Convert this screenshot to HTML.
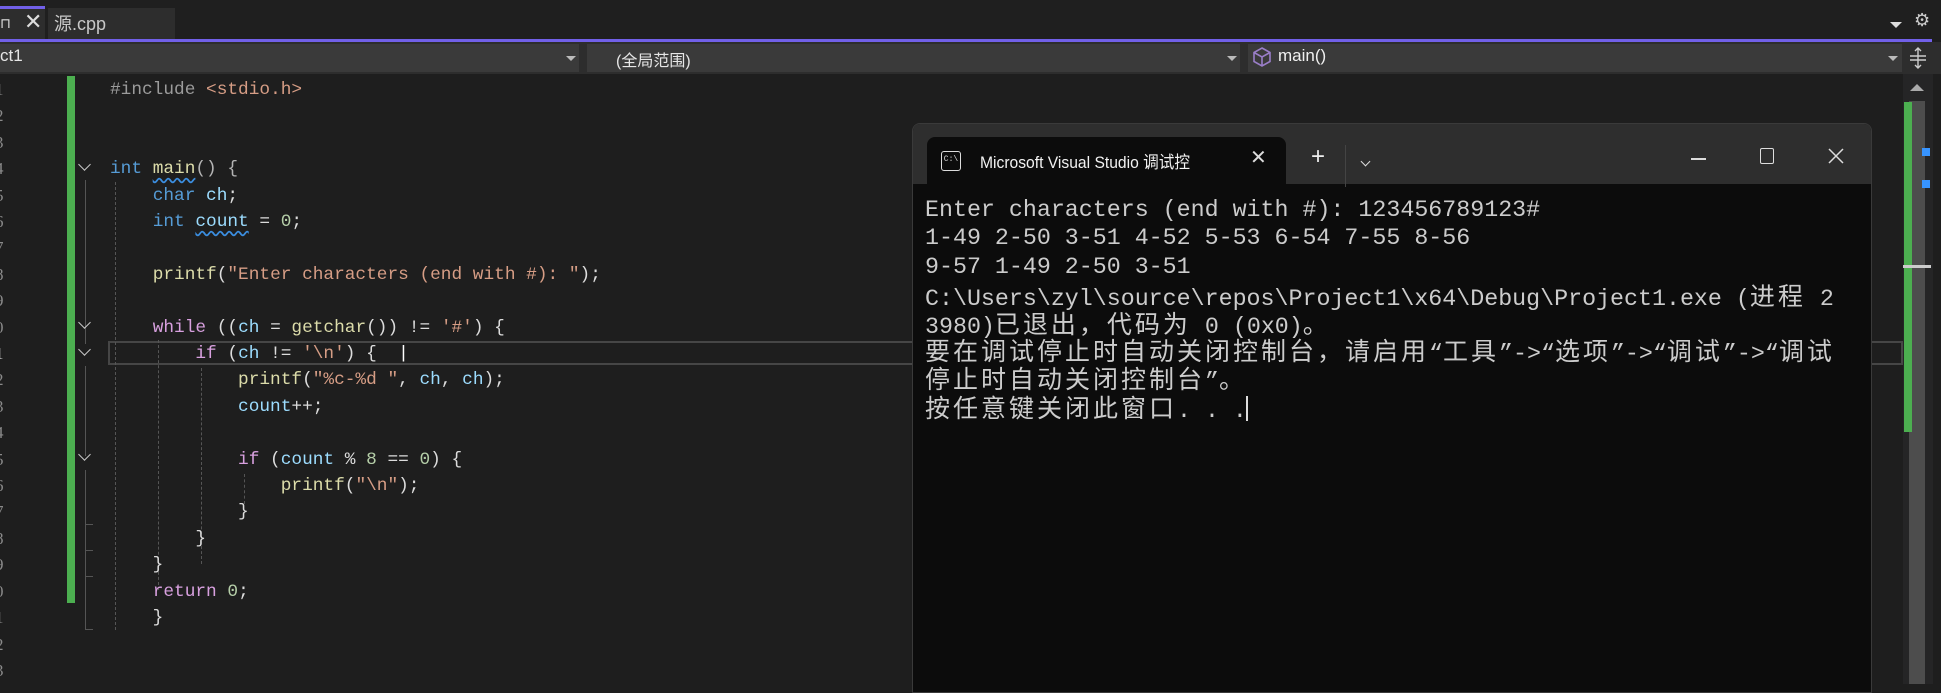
<!DOCTYPE html>
<html><head><meta charset="utf-8"><style>
*{margin:0;padding:0;box-sizing:border-box}
body{width:1941px;height:684px;background:#1e1e1e;position:relative;overflow:hidden;font-family:"Liberation Sans","Noto Sans CJK SC",sans-serif}
.a{position:absolute}
.code{position:absolute;left:110px;font-family:"Liberation Mono","Noto Sans CJK SC",monospace;font-size:17.8px;height:26.4px;line-height:26.4px;white-space:pre;color:#dcdcdc}
.k{color:#569cd6}.c{color:#d8a0df}.f{color:#dcdcaa}.s{color:#d69d85}.v{color:#9cdcfe}.n{color:#b5cea8}.p{color:#9b9b9b}.o{color:#b4b4b4}
.sq{text-decoration:underline wavy #3b8ee0;text-underline-offset:4px}
.ln{position:absolute;left:-5px;font-family:"Liberation Serif",serif;font-size:17px;color:#8a8a8a;height:26.4px;line-height:26.4px}
.chev{position:absolute;left:80px;width:9px;height:9px;border-right:1.6px solid #c8c8c8;border-bottom:1.6px solid #c8c8c8;transform:rotate(45deg)}
.guide{position:absolute;width:0;border-left:1px dashed #555}
.con{position:absolute;left:925px;font-family:"Liberation Mono",monospace;font-size:23.3px;height:28px;line-height:28px;white-space:pre;color:#cccccc}
.cj{font-family:"Noto Sans CJK SC",sans-serif;font-size:25px;letter-spacing:3px}
</style></head><body>
<!-- tab bar -->
<div class="a" style="left:0;top:0;width:1941px;height:40px;background:#1f1f1f"></div>
<div class="a" style="left:0;top:6px;width:45px;height:34px;background:#2d2d2d;border-top:3px solid #7160e8"></div>
<div class="a" style="left:0;top:15px;color:#ddd;font-size:14px">⊓</div>
<div class="a" style="left:24px;top:9px;color:#ddd;font-size:22px">✕</div>
<div class="a" style="left:48px;top:8px;width:127px;height:31px;background:#2d2d2d"></div>
<div class="a" style="left:54px;top:10px;color:#c8c8c8;font-size:18px">源.cpp</div>
<div class="a" style="left:1890px;top:22px;width:0;height:0;border-left:6px solid transparent;border-right:6px solid transparent;border-top:6px solid #ddd"></div>
<div class="a" style="left:1914px;top:10px;color:#ccc;font-size:18px">⚙</div>
<div class="a" style="left:0;top:39px;width:1932px;height:3px;background:#7160e8"></div>
<!-- nav bar -->
<div class="a" style="left:0;top:42px;width:1941px;height:32px;background:#2d2d2d"></div>
<div class="a" style="left:0;top:44px;width:579px;height:28px;background:#3a3a3a"></div>
<div class="a" style="left:587px;top:44px;width:653px;height:28px;background:#3a3a3a"></div>
<div class="a" style="left:1248px;top:44px;width:654px;height:28px;background:#3a3a3a"></div>
<div class="a" style="left:0;top:46px;color:#e6e6e6;font-size:17px">ct1</div>
<div class="a" style="left:616px;top:47px;color:#e6e6e6;font-size:16px">(全局范围)</div>
<svg class="a" style="left:1251px;top:45px" width="22" height="24" viewBox="0 0 22 24"><path d="M11 3 L19 7.5 V16.5 L11 21 L3 16.5 V7.5 Z M3 7.5 L11 12 L19 7.5 M11 12 V21" fill="none" stroke="#9a7ec8" stroke-width="1.6"/></svg>
<div class="a" style="left:1278px;top:46px;color:#f0f0f0;font-size:17px">main()</div>
<div class="a" style="left:566px;top:56px;border-left:5px solid transparent;border-right:5px solid transparent;border-top:5px solid #bbb"></div>
<div class="a" style="left:1227px;top:56px;border-left:5px solid transparent;border-right:5px solid transparent;border-top:5px solid #bbb"></div>
<div class="a" style="left:1888px;top:56px;border-left:5px solid transparent;border-right:5px solid transparent;border-top:5px solid #bbb"></div>
<!-- scrollbar -->
<div class="a" style="left:1903px;top:74px;width:30px;height:610px;background:#252526"></div>
<svg class="a" style="left:1908px;top:46px" width="20" height="24" viewBox="0 0 20 24"><path d="M2 10 H18 M2 14 H18 M10 2 V22 M7 5 L10 2 L13 5 M7 19 L10 22 L13 19" fill="none" stroke="#ccc" stroke-width="1.4"/></svg>
<div class="a" style="left:1910px;top:84px;border-left:7px solid transparent;border-right:7px solid transparent;border-bottom:7px solid #aaa"></div>
<div class="a" style="left:1909px;top:101px;width:16px;height:583px;background:#4d4d4d"></div>
<div class="a" style="left:1904px;top:102px;width:8px;height:330px;background:#4caf50"></div>
<div class="a" style="left:1922px;top:148px;width:8px;height:8px;background:#3794ff"></div>
<div class="a" style="left:1922px;top:180px;width:8px;height:8px;background:#3794ff"></div>
<div class="a" style="left:1903px;top:265px;width:28px;height:3px;background:#ccc"></div>
<!-- code gutter -->
<div class="a" style="left:67px;top:76px;width:8px;height:527px;background:#4caf50"></div>
<div class="a" style="left:108px;top:341px;width:1795px;height:24px;border:2px solid #464646"></div>
<div class="a" style="left:85px;top:180px;width:1px;height:164px;background:#555"></div>
<div class="a" style="left:85px;top:366px;width:1px;height:90px;background:#555"></div>
<div class="a" style="left:85px;top:470px;width:1px;height:160px;background:#555"></div>
<div class="a" style="left:85px;top:524px;width:8px;height:1px;background:#555"></div>
<div class="a" style="left:85px;top:550px;width:8px;height:1px;background:#555"></div>
<div class="a" style="left:85px;top:576px;width:8px;height:1px;background:#555"></div>
<div class="a" style="left:85px;top:629px;width:8px;height:1px;background:#555"></div>
<div class="guide" style="left:115px;top:182px;height:448px"></div>
<div class="guide" style="left:158px;top:340px;height:250px"></div>
<div class="guide" style="left:201px;top:368px;height:196px"></div>
<div class="guide" style="left:244px;top:474px;height:30px"></div>
<div class="chev" style="top:160px"></div>
<div class="chev" style="top:318px"></div>
<div class="chev" style="top:345px"></div>
<div class="chev" style="top:450px"></div>
<div class="ln" style="top:77px">1</div><div class="ln" style="top:103px">2</div><div class="ln" style="top:130px">3</div><div class="ln" style="top:156px">4</div><div class="ln" style="top:183px">5</div><div class="ln" style="top:209px">6</div><div class="ln" style="top:235px">7</div><div class="ln" style="top:262px">8</div><div class="ln" style="top:288px">9</div><div class="ln" style="top:315px">0</div><div class="ln" style="top:341px;color:#ddd">1</div><div class="ln" style="top:367px">2</div><div class="ln" style="top:394px">3</div><div class="ln" style="top:420px">4</div><div class="ln" style="top:447px">5</div><div class="ln" style="top:473px">6</div><div class="ln" style="top:499px">7</div><div class="ln" style="top:526px">8</div><div class="ln" style="top:552px">9</div><div class="ln" style="top:579px">0</div><div class="ln" style="top:605px">1</div><div class="ln" style="top:632px">2</div><div class="ln" style="top:658px">3</div>
<!-- code -->
<div class="code" style="top:77px"><span class="p">#include </span><span class="s">&lt;stdio.h&gt;</span></div>
<div class="code" style="top:156px"><span class="k">int</span> <span class="f sq">main</span><span class="o">() {</span></div>
<div class="code" style="top:183px">    <span class="k">char</span> <span class="v">ch</span>;</div>
<div class="code" style="top:209px">    <span class="k">int</span> <span class="v sq">count</span> = <span class="n">0</span>;</div>
<div class="code" style="top:262px">    <span class="f">printf</span>(<span class="s">"Enter characters (end with #): "</span>);</div>
<div class="code" style="top:315px">    <span class="c">while</span> ((<span class="v">ch</span> = <span class="f">getchar</span>()) != <span class="s">'#'</span>) {</div>
<div class="code" style="top:341px">        <span class="c">if</span> (<span class="v">ch</span> != <span class="s">'\n'</span>) {  <span style="color:#fff">|</span></div>
<div class="code" style="top:367px">            <span class="f">printf</span>(<span class="s">"%c-%d "</span>, <span class="v">ch</span>, <span class="v">ch</span>);</div>
<div class="code" style="top:394px">            <span class="v">count</span>++;</div>
<div class="code" style="top:447px">            <span class="c">if</span> (<span class="v">count</span> % <span class="n">8</span> == <span class="n">0</span>) {</div>
<div class="code" style="top:473px">                <span class="f">printf</span>(<span class="s">"\n"</span>);</div>
<div class="code" style="top:499px">            }</div>
<div class="code" style="top:526px">        }</div>
<div class="code" style="top:552px">    }</div>
<div class="code" style="top:579px">    <span class="c">return</span> <span class="n">0</span>;</div>
<div class="code" style="top:605px">    }</div>
<!-- console -->
<div class="a" style="left:912px;top:123px;width:960px;height:570px;background:#0c0c0c;border:1px solid #3a3a3a;border-radius:8px 8px 0 0;overflow:hidden">
 <div class="a" style="left:0;top:0;width:960px;height:60px;background:#2e2e2e"></div>
 <div class="a" style="left:14px;top:13px;width:359px;height:48px;background:#0c0c0c;border-radius:8px 8px 0 0"></div>
</div>
<div class="a" style="left:941px;top:151px;width:20px;height:20px;border:1.5px solid #ddd;border-radius:3px;font-size:8px;color:#ddd;line-height:16px;text-align:center;font-family:'Liberation Mono',monospace">C:\</div>
<div class="a" style="left:980px;top:148px;color:#f2f2f2;font-size:17px;white-space:nowrap;transform:scaleX(0.92);transform-origin:left">Microsoft Visual Studio 调试控</div>
<div class="a" style="left:1250px;top:145px;color:#ddd;font-size:20px">✕</div>
<div class="a" style="left:1311px;top:143px;color:#eee;font-size:24px;font-weight:300">+</div>
<div class="a" style="left:1345px;top:145px;width:1px;height:42px;background:#444"></div>
<div class="a" style="left:1362px;top:158px;width:7px;height:7px;border-right:1.4px solid #ddd;border-bottom:1.4px solid #ddd;transform:rotate(45deg)"></div>
<div class="a" style="left:1691px;top:158px;width:15px;height:1.5px;background:#ddd"></div>
<div class="a" style="left:1760px;top:148px;width:14px;height:16px;border:1.5px solid #ddd;border-radius:2px"></div>
<svg class="a" style="left:1828px;top:148px" width="16" height="16"><path d="M1 1 L15 15 M15 1 L1 15" stroke="#ddd" stroke-width="1.5"/></svg>
<div class="con" style="top:196px">Enter characters (end with #): 123456789123#</div>
<div class="con" style="top:224px">1-49 2-50 3-51 4-52 5-53 6-54 7-55 8-56</div>
<div class="con" style="top:253px">9-57 1-49 2-50 3-51</div>
<div class="con" style="top:281px">C:\Users\zyl\source\repos\Project1\x64\Debug\Project1.exe (<span class="cj">进程</span> 2</div>
<div class="con" style="top:309px">3980)<span class="cj">已退出，代码为</span> 0 (0x0)<span class="cj">。</span></div>
<div class="con" style="top:336px"><span class="cj">要在调试停止时自动关闭控制台，请启用</span>“<span class="cj">工具</span>”-&gt;“<span class="cj">选项</span>”-&gt;“<span class="cj">调试</span>”-&gt;“<span class="cj">调试</span></div>
<div class="con" style="top:364px"><span class="cj">停止时自动关闭控制台</span>”<span class="cj">。</span></div>
<div class="con" style="top:393px"><span class="cj">按任意键关闭此窗口</span>. . .</div>
<div class="a" style="left:1246px;top:396px;width:1.5px;height:25px;background:#ddd"></div>
</body></html>
